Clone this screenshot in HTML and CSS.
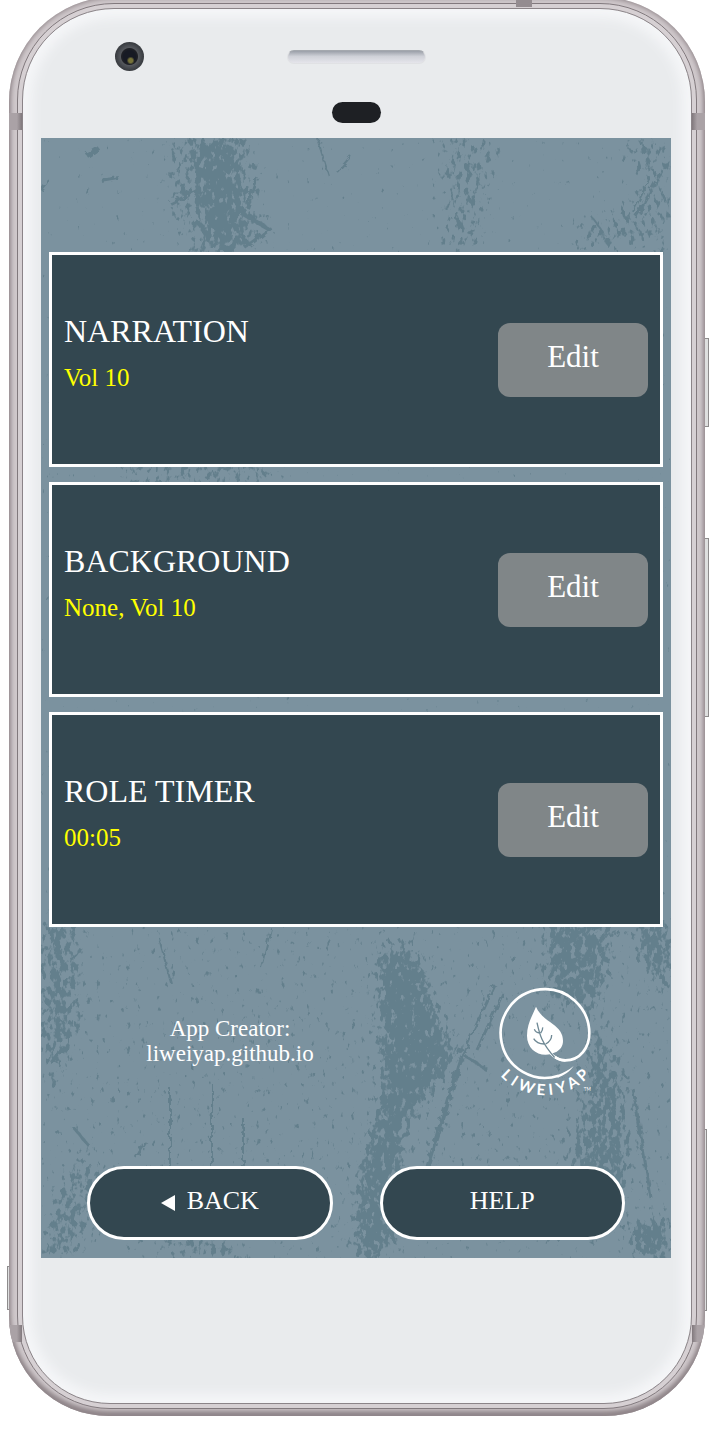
FILE: index.html
```html
<!DOCTYPE html>
<html lang="en">
<head>
<meta charset="utf-8">
<meta name="viewport" content="width=device-width, initial-scale=1">
<title>Settings</title>
<link rel="stylesheet" href="styles.css">
</head>
<body>
<div class="phone">
  <span class="key key-power"></span>
  <span class="key key-volume"></span>
  <span class="key key-edge-right"></span>
  <span class="key key-edge-left"></span>
  <div class="shell">
    <div class="rail">
      <div class="face">
        <div class="sensors">
          <span class="camera"></span>
          <span class="speaker"></span>
          <span class="proximity"></span>
        </div>
        <main class="screen">
          <svg class="texture" viewBox="0 0 630 1120" preserveAspectRatio="none" aria-hidden="true">
            <defs>
              <filter id="grunge" x="0" y="0" width="630" height="1120" filterUnits="userSpaceOnUse" color-interpolation-filters="sRGB">
                <feGaussianBlur in="SourceGraphic" stdDeviation="8" result="density"/>
                <feTurbulence type="fractalNoise" baseFrequency="0.2 0.12" numOctaves="3" seed="8"/>
                <feColorMatrix values="0 0 0 0 0  0 0 0 0 0  0 0 0 0 0  1 0 0 0 0" result="noise"/>
                <feComposite in="noise" in2="density" operator="arithmetic" k2="9" k3="4.6" k4="-7"/>
                <feColorMatrix values="0 0 0 0 .39  0 0 0 0 .498  0 0 0 0 .549  0 0 0 1 0"/>
              </filter>
              <filter id="rough" x="0" y="0" width="630" height="1120" filterUnits="userSpaceOnUse">
                <feTurbulence type="fractalNoise" baseFrequency="0.15" numOctaves="2" seed="3"/>
                <feDisplacementMap in="SourceGraphic" scale="7"/>
              </filter>
            </defs>
            <g filter="url(#grunge)">
              <path opacity=".03" d="M0 0H630V787H0z"/>
              <path opacity=".18" d="M0 787H630V1120H0z"/>
              <path opacity=".5" d="M120 0H215V50L225 100 195 118H150L130 70z"/>
              <path d="M150 0H192L200 60 202 100 180 125 165 90z"/>
              <path opacity=".5" d="M398 0H458L440 112H404z"/>
              <path opacity=".5" d="M580 0H630V112H520L545 80 600 60z"/>
              <path opacity=".5" d="M80 320H235V350H80z"/>
              <path opacity=".7" d="M0 780H34L38 880 12 960 0 900z"/>
              <path d="M336 811H374L402 892 418 916 362 988 354 1101 314 1141 318 1048 342 948z"/>
              <path opacity=".8" d="M503 780H575L559 867H507z"/>
              <path opacity=".75" d="M550 860L583 948 587 1036 563 1093H523L531 1012 547 948z"/>
              <path opacity=".9" d="M595 780H630V860L604 827z"/>
              <path opacity=".9" d="M583 1089L630 1077V1120H595z"/>
              <path opacity=".6" d="M0 1095L40 1012 60 1044 32 1120H0z"/>
              <path opacity=".6" d="M125 1100H200V1120H125z"/>
            </g>
            <g class="scratches" filter="url(#rough)">
              <path stroke-width="5" d="M420 920L370 1085"/>
              <path stroke-width="3" d="M454 847L420 920M462 855L436 912M424 918L446 932"/>
              <path stroke-width="2" d="M129 950V1077M171 945V1060M202 980V1077M118 800L130 845M230 790L220 830"/>
              <path stroke-width="4" d="M60 43L78 40M46 18L58 10M200 75L230 92M204 110L230 90M130 66L158 52M206 70L216 40"/>
              <path stroke-width="2" d="M276 0L288 38M296 34L310 18M616 40L595 80M608 42L592 74M550 78L562 94M0 52L8 42"/>
              <path stroke-width="3" d="M592 950L610 1060M33 990L48 1008M105 1004L95 1020"/>
            </g>
          </svg>

          <section class="card">
            <div class="card-text">
              <h2>NARRATION</h2>
              <p>Vol 10</p>
            </div>
            <button class="edit" type="button" aria-label="Edit narration">Edit</button>
          </section>
          <section class="card">
            <div class="card-text">
              <h2>BACKGROUND</h2>
              <p>None, Vol 10</p>
            </div>
            <button class="edit" type="button" aria-label="Edit background">Edit</button>
          </section>
          <section class="card">
            <div class="card-text">
              <h2>ROLE TIMER</h2>
              <p>00:05</p>
            </div>
            <button class="edit" type="button" aria-label="Edit role timer">Edit</button>
          </section>

          <div class="credits">
            <p class="creator">App Creator:<br><a href="#creator">liweiyap.github.io</a></p>
            <svg class="logo" viewBox="44 48 300 342" role="img" aria-label="Liweiyap logo">
              <path class="ring" d="M235 317A133 133 0 1 1 327 190C327 232 300 271 255 271C234 271 219 260 207 246"/>
              <path class="fill" d="M232 315C250 309 264 301 280 288C268 305 250 317 232 323z"/>
              <path class="fill" d="M167 110C178 135 198 148 217 162C237 177 248 191 248 212C248 228 240 238 229 245L212 252C176 262 140 238 140 197C140 163 155 139 167 110z"/>
              <path class="vein" d="M170 158C178 195 184 219 224 264M162 178Q167 190 180 189M187 172Q188 180 181 189M160 206Q170 223 194 222M214 195Q214 212 196 222"/>
              <path class="ring" d="M224 261Q236 271 255 271"/>
              <text class="wordmark" x="60 88 111 168 206 233 271 307" y="318 342 357 374 375 372 359 337" rotate="43 33 19 4 -6 -17 -30 -42">LIWEIYAP</text>
              <text class="trademark" x="310" y="364">TM</text>
            </svg>
          </div>

          <nav class="actions">
            <button class="pill" type="button"><svg class="arrow" viewBox="0 0 14 16" aria-hidden="true"><path d="M0 8L14 0V16z"/></svg>BACK</button>
            <button class="pill" type="button">HELP</button>
          </nav>
        </main>
      </div>
    </div>
    <span class="band band-top"></span>
    <span class="band band-upper"></span>
    <span class="band band-upper band-right"></span>
    <span class="band band-lower"></span>
    <span class="band band-lower band-right"></span>
  </div>
</div>
</body>
</html>
```

FILE: styles.css
```css
* {
  box-sizing: border-box;
}

body {
  margin: 0;
  background: #fff;
  color: #fff;
  font-family: "Liberation Serif", serif;
  overflow-x: hidden;
}

h2,
p {
  margin: 0;
  font-weight: 400;
}

button {
  font-family: inherit;
  color: inherit;
  cursor: pointer;
}

/* Phone body */
.phone {
  position: relative;
  display: flow-root;
  margin: 0 7px 20px 9px;
  isolation: isolate;
}

.shell {
  position: relative;
  margin-top: -3px;
  padding: 6px 8px 7px;
  overflow: hidden;
  border-radius: 105px 105px 100px 100px;
  background: #cfc8cb;
  box-shadow: inset 0 0 5px 1px #91878b, inset 0 -5px 5px #8f8589;
}

.rail {
  padding: 4px;
  border: 1px solid #81797d;
  border-radius: 97px 97px 93px 93px;
  background: #d6d0d3;
}

.face {
  padding: 0 20px 145px 18px;
  border: 1px solid #8b8488;
  border-radius: 92px 92px 88px 88px;
  background: #e9ebed;
  box-shadow: inset 0 0 12px 9px #f5f6f8;
}

.key {
  position: absolute;
  z-index: -1;
  border: 1px solid #8e8c8d;
  background: #dedfdf;
}

.key-power {
  top: 338px;
  right: -4px;
  width: 6px;
  height: 89px;
}

.key-volume {
  top: 538px;
  right: -4px;
  width: 6px;
  height: 179px;
}

.key-edge-right {
  top: 1129px;
  right: -2px;
  width: 4px;
  height: 182px;
}

.key-edge-left {
  top: 1266px;
  left: -2px;
  width: 4px;
  height: 44px;
}

.band {
  position: absolute;
  left: 0;
  width: 13px;
  height: 17px;
  background: linear-gradient(90deg, #aaa2a6 60%, #81797d);
}

.band-right {
  left: auto;
  right: 0;
  background: linear-gradient(270deg, #aaa2a6 60%, #81797d);
}

.band-top {
  top: 0;
  left: auto;
  right: 173px;
  width: 16px;
  height: 10px;
  background: #948c90;
}

.band-upper {
  top: 116px;
}

.band-lower {
  bottom: 74px;
}

/* Camera, speaker and proximity sensor */
.sensors {
  display: grid;
  grid-template-columns: 1fr auto 1fr;
  grid-template-rows: auto auto;
  align-items: center;
  row-gap: 31px;
  height: 129px;
  padding-top: 33px;
  align-content: start;
}

.camera {
  width: 29px;
  height: 29px;
  margin-left: 74px;
  border-radius: 50%;
  background: radial-gradient(circle at 54% 64%, #77733a 0 2px, transparent 4px), radial-gradient(circle, #171a24 0 6px, #202126 8px, #55585d 9px, #3e4146 13px, #25272a);
}

.speaker {
  width: 139px;
  height: 14px;
  border: 1px solid #e0e1e4;
  border-top-color: #a4a8ae;
  border-radius: 7px;
  background: linear-gradient(#9a9fa8, #cfd1d8 45%, #e5e5eb);
}

.proximity {
  grid-column: 2;
  justify-self: center;
  width: 49px;
  height: 21px;
  border-radius: 11px;
  background: #1e2024;
}

/* App screen */
.screen {
  position: relative;
  isolation: isolate;
  display: flex;
  flex-direction: column;
  gap: 15px;
  padding: 114px 8px 18px;
  background: #7b929f;
}

.texture {
  position: absolute;
  inset: 0;
  z-index: -1;
  width: 100%;
  height: 100%;
}

.scratches {
  fill: none;
  stroke: #647f8c;
}

.card {
  display: flex;
  align-items: center;
  justify-content: space-between;
  min-height: 215px;
  padding: 0 12px;
  border: 3px solid #fff;
  background: #334750;
}

.card-text {
  display: grid;
  gap: 12px;
  padding-bottom: 16px;
}

.card h2 {
  font-size: 32px;
  line-height: 40px;
}

.card p {
  color: #ff0;
  font-size: 25px;
  line-height: 30px;
}

.edit {
  width: 150px;
  height: 74px;
  padding: 0 0 6px;
  border: 0;
  border-radius: 12px;
  background: #808688;
  font-size: 31px;
}

.credits {
  display: grid;
  grid-template-columns: 3fr 2fr;
  align-items: center;
  justify-items: center;
  height: 209px;
  margin: 0 -8px;
  padding-bottom: 8px;
}

.creator {
  padding-bottom: 4px;
  font-size: 23px;
  line-height: 25px;
  text-align: center;
}

.creator a {
  color: inherit;
  text-decoration: none;
}

.logo {
  width: 100px;
  height: 114px;
}

.ring {
  fill: none;
  stroke: #fff;
  stroke-width: 8;
}

.fill,
.wordmark,
.trademark {
  fill: #fff;
}

.vein {
  fill: none;
  stroke: #6f8995;
  stroke-width: 4;
}

.wordmark {
  font: 700 46px Lato, sans-serif;
}

.trademark {
  font: 400 14px Lato, sans-serif;
}

.actions {
  display: grid;
  grid-template-columns: 1fr 1fr;
  gap: 47px;
  padding: 0 38px;
}

.pill {
  display: flex;
  align-items: center;
  justify-content: center;
  gap: 12px;
  height: 74px;
  padding: 0 0 4px;
  border: 3px solid #fff;
  border-radius: 37px;
  background: #334750;
  font-size: 26px;
}

.arrow {
  width: 14px;
  height: 16px;
  margin-top: 4px;
  fill: #fff;
}
```
